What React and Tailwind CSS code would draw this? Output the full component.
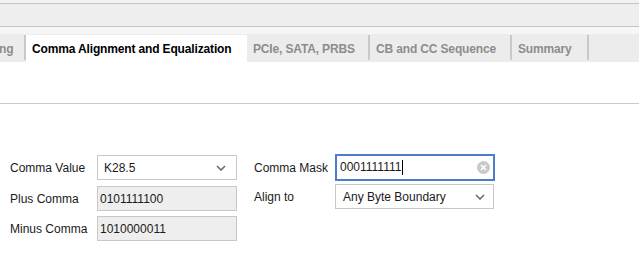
import React from 'react'

const font = { fontFamily: '"Liberation Sans", Arial, sans-serif' }

const Sep = () => <div className="mt-px h-[25px] w-[2px] shrink-0 bg-[#c9c9c9]" />

const Chevron = () => (
  <svg width="10" height="6" viewBox="0 0 10 6" className="shrink-0">
    <path d="M1 1 L5 5 L9 1" fill="none" stroke="#6b6b6b" strokeWidth="1.6" />
  </svg>
)

const App = () => {
  return (
    <div className="h-[277px] w-[639px] overflow-hidden bg-white text-[12px] text-[#1a1a1a]" style={font}>
      {/* top toolbar strip */}
      <div className="h-[3px] bg-[#f2f2f2]" />
      <div className="h-[24px] border-y border-[#c4c4c4] bg-[#eeeeee]" />
      <div className="h-[7px] bg-[#f6f6f6]" />

      {/* tabs */}
      <div className="flex h-[28px] bg-[#ececec] font-bold tracking-[-0.15px] text-[#8c8c8c]">
        <div className="flex w-[24px] items-center overflow-hidden pt-px">
          <span className="-ml-[1px]">ng</span>
        </div>
        <Sep />
        <div className="mt-px flex h-[28px] w-[221px] items-center bg-white pl-[6px] text-black">
          Comma Alignment and Equalization
        </div>
        <div className="flex w-[121px] items-center pl-[6px] pt-px">PCIe, SATA, PRBS</div>
        <Sep />
        <div className="flex w-[140px] items-center pl-[6px] pt-px">CB and CC Sequence</div>
        <Sep />
        <div className="flex w-[75px] items-center pl-[6px] pt-px">Summary</div>
        <Sep />
        <div className="flex-1" />
      </div>

      {/* content */}
      <div className="h-[41px]" />
      <div className="h-px bg-[#cbcbcb]" />

      <div className="flex pl-[10px] pt-[51px]">
        <div className="flex w-[227px] flex-col">
          <div className="flex h-[25px] items-center">
            <span className="w-[87px]">Comma Value</span>
            <div className="flex h-[25px] w-[140px] items-center justify-between border border-[#c8c8c8] bg-white pl-[6px] pr-[10px]">
              <span>K28.5</span>
              <Chevron />
            </div>
          </div>
          <div className="mt-[6px] flex h-[25px] items-center">
            <span className="w-[87px]">Plus Comma</span>
            <div className="flex h-[25px] w-[140px] items-center border border-[#c8c8c8] bg-[#eeeeee] pl-[2px]">
              0101111100
            </div>
          </div>
          <div className="mt-[5px] flex h-[25px] items-center">
            <span className="w-[87px]">Minus Comma</span>
            <div className="flex h-[25px] w-[140px] items-center border border-[#c8c8c8] bg-[#eeeeee] pl-[2px]">
              1010000011
            </div>
          </div>
        </div>

        <div className="ml-[17px] flex flex-col">
          <div className="flex h-[25px] items-center">
            <span className="w-[81px]">Comma Mask</span>
            <div className="-mt-px flex h-[27px] w-[160px] items-center justify-between border-2 border-[#4d7cc9] bg-white pl-[3px] pr-[3px]">
              <span className="flex items-center">
                0001111111
                <span className="ml-px inline-block h-[15px] w-px bg-black" />
              </span>
              <svg width="13" height="13" viewBox="0 0 13 13">
                <circle cx="6.5" cy="6.5" r="6.5" fill="#c9c9c9" />
                <path d="M4 4 L9 9 M9 4 L4 9" stroke="#fff" strokeWidth="1.6" />
              </svg>
            </div>
          </div>
          <div className="mt-[4px] flex h-[25px] items-center">
            <span className="w-[81px]">Align to</span>
            <div className="flex h-[25px] w-[159px] items-center justify-between border border-[#c8c8c8] bg-white pl-[7px] pr-[8px]">
              <span>Any Byte Boundary</span>
              <Chevron />
            </div>
          </div>
        </div>
      </div>
    </div>
  )
}

export default App
